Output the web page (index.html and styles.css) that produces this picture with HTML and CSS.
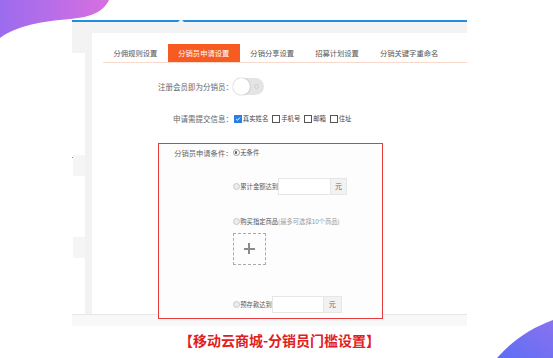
FILE: index.html
```html
<!DOCTYPE html>
<html lang="zh-CN">
<head>
<meta charset="utf-8">
<title>分销员门槛设置</title>
<link rel="stylesheet" href="styles.css">
</head>
<body>
<div class="frame">
  <div class="topbar"></div>
  <div class="band"></div>
  <div class="main">
    <div class="side">
      <div class="side-top"></div>
      <div class="side-body">
        <div class="side-col">
          <span class="side-dot"></span>
          <span class="side-block b1"></span>
          <span class="side-block b2"></span>
        </div>
        <div class="side-strip"></div>
      </div>
    </div>
    <div class="panel">
      <div class="tabs">
        <span class="tab">分佣规则设置</span>
        <span class="tab active">分销员申请设置</span>
        <span class="tab">分销分享设置</span>
        <span class="tab">招募计划设置</span>
        <span class="tab">分销关键字重命名</span>
      </div>
      <div class="row r1">
        <span class="lbl">注册会员即为分销员：</span>
        <span class="toggle"><span class="knob"></span><span class="ring"></span></span>
      </div>
      <div class="row r2">
        <span class="lbl">申请需提交信息：</span>
        <span class="checks">
          <span class="chk"><span class="box on"><svg viewBox="0 0 8 8"><path d="M1.6 4.1 L3.3 5.7 L6.5 2.2" fill="none" stroke="#fff" stroke-width="1.3"/></svg></span>真实姓名</span>
          <span class="chk"><span class="box"></span>手机号</span>
          <span class="chk"><span class="box"></span>邮箱</span>
          <span class="chk"><span class="box"></span>住址</span>
        </span>
      </div>
      <div class="redbox">
        <div class="rb-label">分销员申请条件：</div>
        <div class="opts">
          <div class="opt o1"><span class="radio on"></span>无条件</div>
          <div class="opt o2"><span class="radio"></span>累计金额达到<span class="input"></span><span class="addon">元</span></div>
          <div class="opt o3"><span class="radio"></span>购买指定商品<span class="hint">(最多可选择10个商品)</span></div>
          <div class="plus"><span class="ph"></span><span class="pv"></span></div>
          <div class="opt o4"><span class="radio"></span>预存款达到<span class="input i2"></span><span class="addon a2">元</span></div>
        </div>
      </div>
    </div>
  </div>
  <div class="footer"></div>
</div>
<div class="caption">【移动云商城-分销员门槛设置】</div>
<svg class="blob tl" viewBox="0 0 112 40" width="112" height="40">
  <defs>
    <linearGradient id="g1" x1="0" y1="0" x2="1" y2="0">
      <stop offset="0" stop-color="#9c6cef"/>
      <stop offset="1" stop-color="#d86fe0"/>
    </linearGradient>
  </defs>
  <path d="M0 0 H109 C103 12 92 17 70 19 C42 21 16 26 0 38 Z" fill="url(#g1)"/>
</svg>
<svg class="blob br" viewBox="0 0 60 40" width="60" height="40">
  <defs>
    <linearGradient id="g2" x1="0" y1="1" x2="1" y2="0">
      <stop offset="0" stop-color="#5d6ef4"/>
      <stop offset="1" stop-color="#8a72f0"/>
    </linearGradient>
  </defs>
  <path d="M60 2 V40 H4 C20 22 38 10 60 2 Z" fill="url(#g2)"/>
</svg>
</body>
</html>
```
FILE: styles.css
```css
html, body {
  margin: 0;
  padding: 0;
}
body {
  width: 553px;
  height: 358px;
  overflow: hidden;
  position: relative;
  background: #fff;
  font-family: "Noto Sans CJK SC", "Noto Sans", sans-serif;
  color: #666;
}
.frame {
  margin-left: 72px;
  width: 395px;
  padding-top: 20px;
}
.topbar {
  height: 2px;
  background: #1f8ee2;
  position: relative;
}
.topbar::after {
  content: "";
  position: absolute;
  left: 106px;
  bottom: 0;
  border-left: 3px solid transparent;
  border-right: 3px solid transparent;
  border-bottom: 3px solid #f3f3f3;
}
.band {
  height: 11px;
  background: #f3f3f3;
}
.main {
  display: flex;
  height: 281px;
}
.side {
  width: 20px;
  display: flex;
  flex-direction: column;
}
.side-top {
  height: 20px;
  background: #f3f3f3;
}
.side-body {
  flex: 1;
  display: flex;
}
.side-col {
  width: 13px;
  position: relative;
}
.side-block {
  position: absolute;
  left: 1px;
  width: 12px;
  height: 21px;
  background: #f5f5f5;
}
.side-block.b1 { top: 102px; }
.side-block.b2 { top: 184px; }
.side-dot {
  position: absolute;
  left: 0;
  top: 104px;
  width: 1px;
  height: 1px;
  background: #888;
}
.side-strip {
  width: 7px;
  background: #f2f2f2;
}
.panel {
  flex: 1;
  background: #fff;
  padding: 11px 0 0 11px;
}
.tabs {
  display: flex;
  height: 18px;
  border-bottom: 1.5px solid #f8dacd;
}
.tab {
  padding: 0 10.5px;
  font-size: 7.3px;
  line-height: 18px;
  color: #555;
  white-space: nowrap;
}
.tab.active {
  background: #f75b22;
  color: #fff;
}
.row {
  display: flex;
  align-items: center;
}
.lbl {
  width: 130px;
  text-align: right;
  font-size: 7.5px;
  color: #666;
  white-space: nowrap;
}
.r1 {
  margin-top: 14.5px;
  height: 17px;
}
.r2 {
  margin-top: 18px;
  height: 12px;
}
.toggle {
  width: 31px;
  height: 17px;
  border-radius: 9px;
  background: #e4e4e4;
  position: relative;
  display: flex;
  align-items: center;
  justify-content: space-between;
}
.knob {
  width: 17px;
  height: 17px;
  border-radius: 50%;
  background: #fff;
  box-shadow: 0 0 1.5px rgba(0,0,0,0.35);
}
.ring {
  width: 3px;
  height: 3px;
  border: 0.8px solid #cfcfcf;
  border-radius: 50%;
  margin-right: 5px;
}
.checks {
  display: flex;
  gap: 4px;
  margin-left: 1px;
}
.chk {
  display: flex;
  align-items: center;
  font-size: 6.4px;
  color: #444;
  white-space: nowrap;
}
.box {
  width: 6px;
  height: 6px;
  border: 0.8px solid #555;
  margin-right: 0.8px;
  background: #fff;
  display: inline-flex;
}
.box.on {
  background: #2b7fe3;
  border-color: #2b7fe3;
}
.box svg {
  width: 6px;
  height: 6px;
}
.redbox {
  position: relative;
  z-index: 2;
  margin-top: 18.5px;
  margin-left: 55px;
  width: 223px;
  border: 1.5px solid #e63a3e;
  background: #fdfdfd;
  display: flex;
  padding-bottom: 5px;
}
.rb-label {
  width: 73.5px;
  text-align: right;
  font-size: 7.3px;
  line-height: 12px;
  margin-top: 2.5px;
  color: #666;
  white-space: nowrap;
}
.opts {
  display: flex;
  flex-direction: column;
  align-items: flex-start;
}
.opt {
  display: flex;
  align-items: center;
  font-size: 6.3px;
  color: #555;
  white-space: nowrap;
}
.o1 { margin-top: 2.5px; height: 12px; }
.o2 { margin-top: 20px; height: 16px; }
.o3 { margin-top: 21px; height: 12px; }
.o4 { margin-top: 32px; height: 16px; }
.radio {
  width: 5px;
  height: 5px;
  border: 0.7px solid #c9c9c9;
  background: #ececec;
  border-radius: 50%;
  margin-right: 0.8px;
  position: relative;
}
.radio.on {
  background: #fff;
  border-color: #999;
}
.radio.on::after {
  content: "";
  position: absolute;
  left: 1.2px;
  top: 1.2px;
  width: 2.6px;
  height: 2.6px;
  border-radius: 50%;
  background: #555;
}
.input {
  width: 51px;
  height: 15px;
  border: 0.7px solid #e6e6e6;
  background: #fff;
}
.input.i2 { width: 50px; }
.addon {
  width: 15px;
  height: 15px;
  border: 0.7px solid #e6e6e6;
  border-left: none;
  background: #f2f2f2;
  font-size: 7px;
  line-height: 15px;
  text-align: center;
  color: #666;
}
.addon.a2 { width: 17px; }
.hint {
  color: #999;
}
.plus {
  margin-top: 5px;
  width: 31px;
  height: 30px;
  border: 0.8px dashed #aaa;
  position: relative;
}
.ph, .pv {
  position: absolute;
  background: #8a8a8a;
}
.ph {
  left: 10px;
  top: 14px;
  width: 11px;
  height: 2.2px;
}
.pv {
  left: 14.5px;
  top: 9.5px;
  width: 2.2px;
  height: 11px;
}
.footer {
  height: 11px;
  border-top: 1px solid #e6e6e6;
  background: #f8f8f8;
  position: relative;
  z-index: 1;
}
.caption {
  margin-top: 6px;
  padding-left: 6px;
  text-align: center;
  font-size: 14px;
  line-height: 17px;
  font-weight: 700;
  color: #e0201e;
  white-space: nowrap;
}
.blob {
  position: absolute;
  display: block;
}
.blob.tl {
  left: 0;
  top: 0;
}
.blob.br {
  right: 0;
  bottom: 0;
}
```
